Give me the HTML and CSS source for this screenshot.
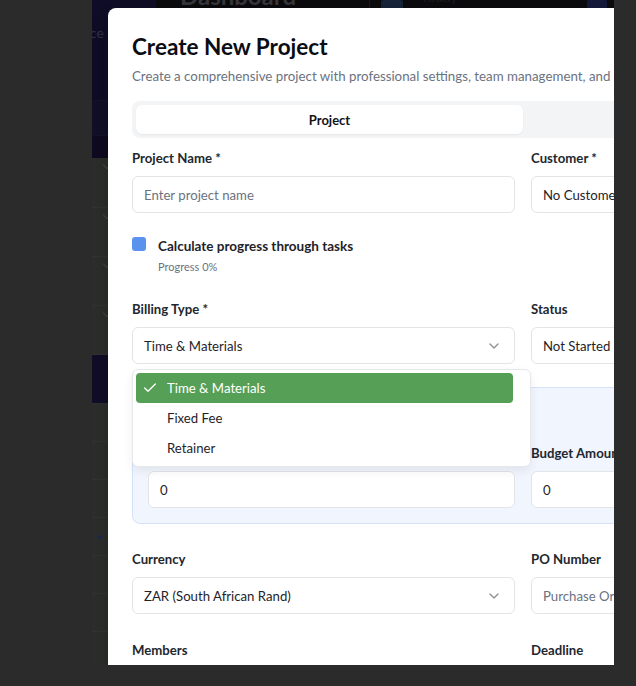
FILE: index.html
```html
<!DOCTYPE html>
<html lang="en">
<head>
<meta charset="utf-8">
<title>Create New Project</title>
<link rel="stylesheet" href="styles.css">
</head>
<body>
<div class="screen">
  <div class="frame">
    <div class="bg-side">
      <div class="bg-nav">
        <div class="bg-nav-item"><span class="bg-nav-text">Finance</span></div>
        <div class="bg-nav-band"></div>
        <div class="bg-nav-band dark"></div>
      </div>
      <div class="bg-list">
        <div class="bg-row"><span class="bg-chev"></span></div>
        <div class="bg-row"><span class="bg-chev"></span></div>
        <div class="bg-row"><span class="bg-chev"></span></div>
        <div class="bg-row"><span class="bg-chev"></span></div>
        <div class="bg-row navy"></div>
        <div class="bg-row thin"></div>
        <div class="bg-row thin"></div>
        <div class="bg-row thin"></div>
        <div class="bg-row thin dot"><span class="bg-dot"></span></div>
        <div class="bg-row thin"></div>
        <div class="bg-row thin"></div>
      </div>
    </div>
    <div class="bg-main">
      <div class="bg-header">
        <span class="bg-title">Dashboard</span>
        <span class="bg-sep"></span>
        <span class="bg-btn"></span>
        <span class="bg-muted">Today</span>
        <span class="bg-spacer"></span>
        <span class="bg-btn navy"></span>
      </div>
    </div>

    <div class="modal">
      <h2 class="title">Create New Project</h2>
      <p class="subtitle">Create a comprehensive project with professional settings, team management, and billing options.</p>

      <div class="tabs">
        <div class="tab active">Project</div>
        <div class="tab">Settings</div>
      </div>

      <div class="form">
        <div class="row">
          <div class="field">
            <label class="label">Project Name *</label>
            <div class="input placeholder">Enter project name</div>
          </div>
          <div class="field">
            <label class="label">Customer *</label>
            <div class="input select">No Customer<svg class="chev" viewBox="0 0 24 24"><path d="m6 9 6 6 6-6"/></svg></div>
          </div>
        </div>

        <div class="check-row">
          <span class="checkbox"></span>
          <div class="check-text">
            <div class="check-label">Calculate progress through tasks</div>
            <div class="check-hint">Progress 0%</div>
          </div>
        </div>

        <div class="row billing">
          <div class="field">
            <label class="label">Billing Type *</label>
            <div class="select-wrap">
              <div class="input select">Time &amp; Materials<svg class="chev" viewBox="0 0 24 24"><path d="m6 9 6 6 6-6"/></svg></div>
              <div class="menu">
                <div class="item selected"><svg class="tick" viewBox="0 0 24 24"><path d="M20 6 9 17l-5-5"/></svg>Time &amp; Materials</div>
                <div class="item">Fixed Fee</div>
                <div class="item">Retainer</div>
              </div>
            </div>
          </div>
          <div class="field">
            <label class="label">Status</label>
            <div class="input select">Not Started<svg class="chev" viewBox="0 0 24 24"><path d="m6 9 6 6 6-6"/></svg></div>
          </div>
        </div>

        <div class="panel">
          <div class="panel-head">Budget &amp; Time Tracking</div>
          <div class="panel-grid">
            <div class="field">
              <label class="label">Estimated Hours</label>
              <div class="input">0</div>
            </div>
            <div class="field">
              <label class="label">Budget Amount</label>
              <div class="input">0</div>
            </div>
          </div>
        </div>

        <div class="row currency">
          <div class="field">
            <label class="label">Currency</label>
            <div class="input select">ZAR (South African Rand)<svg class="chev" viewBox="0 0 24 24"><path d="m6 9 6 6 6-6"/></svg></div>
          </div>
          <div class="field">
            <label class="label">PO Number</label>
            <div class="input placeholder">Purchase Order Number</div>
          </div>
        </div>

        <div class="row members">
          <div class="field">
            <label class="label">Members</label>
            <div class="input select">Select members<svg class="chev" viewBox="0 0 24 24"><path d="m6 9 6 6 6-6"/></svg></div>
          </div>
          <div class="field">
            <label class="label">Deadline</label>
            <div class="input placeholder">Pick a date</div>
          </div>
        </div>
      </div>
    </div>
  </div>
</div>
</body>
</html>
```

FILE: styles.css
```css
* { box-sizing: border-box; margin: 0; padding: 0; }
html, body { width: 636px; height: 686px; overflow: hidden; }
body { background: #2b2b2b; font-family: "Lato", "Inter", sans-serif; color: #1f2329; }

.screen { padding-left: 92px; }
.frame {
  position: relative;
  width: 522px;
  height: 665px;
  overflow: hidden;
  display: flex;
  background: #2e302e;
}

/* dimmed dashboard behind the dialog */
.bg-side { width: 64px; display: flex; flex-direction: column; flex-shrink: 0; }
.bg-nav { height: 158px; background: #0f0d27; display: flex; flex-direction: column; }
.bg-nav-item { height: 100px; padding-top: 24px; overflow: hidden; }
.bg-nav-text { display: block; text-indent: -36px; font-size: 14px; line-height: 18px; color: #34344a; white-space: nowrap; }
.bg-nav-band { height: 35px; background: #121029; border-top: 1px solid #16142d; }
.bg-nav-band.dark { height: 23px; background: #100a22; }
.bg-list { flex: 1; display: flex; flex-direction: column; }
.bg-row { height: 49px; border-bottom: 1px solid #333633; position: relative; }
.bg-row:first-child { height: 50px; }
.bg-row.navy { height: 49px; background: #110d28; border-bottom: 1px solid #2f3230; }
.bg-row.thin { height: 38px; }
.bg-chev { position: absolute; left: 12px; top: 4px; width: 6px; height: 6px; border-right: 1px solid #474a47; border-bottom: 1px solid #474a47; transform: rotate(45deg); }
.bg-dot { position: absolute; left: 6px; top: 17px; width: 4px; height: 4px; border-radius: 50%; background: #1c2a55; }

.bg-main { flex: 1; display: flex; flex-direction: column; }
.bg-header { height: 60px; background: #0b0b0d; display: flex; align-items: flex-start; padding-left: 24px; overflow: hidden; }
.bg-title { display: block; margin-top: -16px; font-size: 24px; line-height: 24px; font-weight: 700; color: #38383c; }
.bg-sep { width: 1px; height: 60px; background: #1a1a1d; margin-left: 73px; }
.bg-btn { width: 22px; height: 30px; background: #17243a; margin-left: 11px; border-radius: 2px; }
.bg-btn.navy { background: #141a3b; margin-right: 7px; width: 20px; }
.bg-muted { margin-left: 18px; margin-top: -12px; font-size: 14px; color: #1c1c20; }
.bg-spacer { flex: 1; }

/* dialog */
.modal {
  position: absolute;
  left: 16px;
  top: 8px;
  width: 830px;
  height: 760px;
  background: #ffffff;
  border-radius: 8px;
  padding: 24px;
  box-shadow: 0 10px 30px rgba(0, 0, 0, 0.3);
}
.title { padding-top: 1px; font-size: 22.5px; line-height: 28px; font-weight: 700; color: #0b0d14; }
.subtitle { margin-top: 5px; font-size: 13.3px; line-height: 20px; color: #6b7280; white-space: nowrap; }

.tabs {
  margin-top: 15px;
  display: grid;
  grid-template-columns: 1fr 1fr;
  padding: 4px;
  background: #f3f4f6;
  border-radius: 8px;
  width: 782px;
}
.tab { height: 29px; display: flex; align-items: center; justify-content: center; font-size: 13px; font-weight: 700; color: #6b7280; border-radius: 6px; }
.tab.active { background: #ffffff; color: #111318; box-shadow: 0 1px 2px rgba(0, 0, 0, 0.06); }

.form { margin-top: 12px; display: flex; flex-direction: column; width: 782px; }
.row { display: grid; grid-template-columns: 383px 383px; column-gap: 16px; }
.field { display: flex; flex-direction: column; }
.label { font-size: 13.2px; line-height: 16px; font-weight: 700; color: #23272f; margin-bottom: 10px; }

.input {
  height: 37px;
  border: 1px solid #e2e4e8;
  border-radius: 6px;
  background: #ffffff;
  padding: 0 12px 0 11px;
  display: flex;
  align-items: center;
  font-size: 13.2px;
  color: #1f2329;
  white-space: nowrap;
  overflow: hidden;
}
.input.placeholder { color: #6b7280; }
.input.select { justify-content: space-between; }
.chev { width: 16px; height: 16px; fill: none; stroke: #1f2329; stroke-width: 2; stroke-linecap: round; stroke-linejoin: round; opacity: 0.5; flex-shrink: 0; }

.check-row { margin-top: 24px; display: flex; align-items: flex-start; gap: 12px; }
.checkbox { width: 14px; height: 14px; border-radius: 3px; background: #5a93ee; flex-shrink: 0; }
.check-label { font-size: 13.5px; line-height: 18px; font-weight: 700; color: #1f2329; }
.check-hint { margin-top: 4px; font-size: 11px; line-height: 16px; color: #6b7280; }

.billing { margin-top: 26px; position: relative; z-index: 2; }
.select-wrap { position: relative; }
.menu {
  position: absolute;
  left: 0;
  top: 42px;
  width: 399px;
  background: #ffffff;
  border: 1px solid #e5e7eb;
  border-radius: 6px;
  padding: 3px 17px 3px 3px;
  box-shadow: 0 4px 10px rgba(0, 0, 0, 0.07);
}
.item { position: relative; height: 30px; display: flex; align-items: center; padding-left: 31px; font-size: 13.2px; color: #1f2329; border-radius: 4px; }
.item.selected { background: #569f56; color: #ffffff; }
.tick { position: absolute; left: 6px; top: 7px; width: 16px; height: 16px; fill: none; stroke: #ffffff; stroke-width: 2; stroke-linecap: round; stroke-linejoin: round; }

.panel {
  margin-top: 23px;
  border: 1px solid #d4e2fa;
  background: #f0f5fe;
  border-radius: 8px;
  padding: 15px;
}
.panel-head { font-size: 14px; line-height: 20px; font-weight: 700; color: #1f2329; margin-bottom: 22px; }
.panel-grid { display: grid; grid-template-columns: 367px 367px; column-gap: 16px; }

.currency { margin-top: 27px; }
.members { margin-top: 28px; }
```
